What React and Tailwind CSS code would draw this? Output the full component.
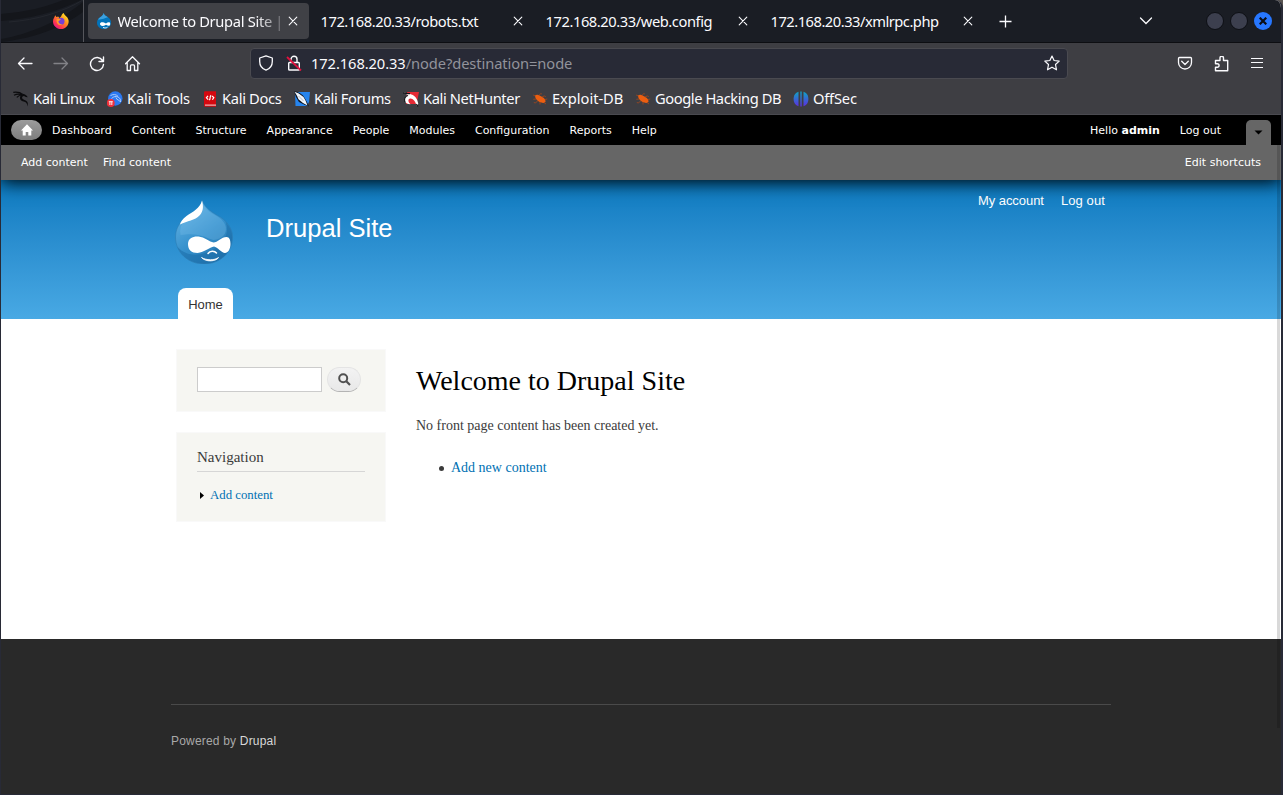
import React from "react";

const TABS = [
  { title: "172.168.20.33/robots.txt", tracking: "tracking-[-0.45px]" },
  { title: "172.168.20.33/web.config", tracking: "tracking-[-0.43px]" },
  { title: "172.168.20.33/xmlrpc.php", tracking: "tracking-[-0.49px]" },
];

const ADMIN_LINKS = [
  "Dashboard",
  "Content",
  "Structure",
  "Appearance",
  "People",
  "Modules",
  "Configuration",
  "Reports",
  "Help",
];

function DrupalLogo({ className }) {
  return (
    <svg className={className} viewBox="0 0 57 64">
      <defs>
        <linearGradient id="drop" x1="0.2" y1="0.1" x2="0.8" y2="1">
          <stop offset="0" stopColor="#5fb0e2" />
          <stop offset="0.5" stopColor="#3590cc" />
          <stop offset="1" stopColor="#2474ad" />
        </linearGradient>
      </defs>
      <path
        d="M26.700 0C28 6 34 11 42 15.500C51 20 57 28 57 37C57 53 44 64 28.500 64C13 64 0 53 0 37C0 27 6 20 13 15.500C21 11 26 8 26.700 0Z"
        fill="url(#drop)"
        stroke="#2a78ae"
        strokeWidth="0.500"
      />
      <path
        d="M50 22C55 27 56.500 32 56.500 37C56.500 53 44 63.500 28.500 63.500C16 63.500 6 57 2 47C12 58 28 56 40 48C50 41 54 32 50 22Z"
        fill="#1769a5"
        opacity="0.5"
      />
      <path
        d="M27.500 4C30 10 36 13 41 16C48 20 52 26 50 32C49 37 42 40 38 40C30 38 24 32 5 35C4 30 5 26 8 22C16 20 26 18 27.500 4Z"
        fill="#7fc0ea"
        opacity="0.3"
      />
      <path
        d="M26.500 .5C24 9 18 11 11 16C7 19 5 22 4.500 24.500C12 20.500 19 21 24.500 15C28 11 28 6 26.500 .5Z"
        fill="#fff"
      />
      <path
        d="M12.500 44C12.500 38 18 36 23 36.500C29 37 34 42 38 42.500C42 42.500 46 37 51 37C54 37 55 40 55 44C55 49 52.500 53 49.500 53C46 53 42 47 38.500 46.500C34 47 29 52.500 22 53C16 53 12.500 50 12.500 44Z"
        fill="#fff"
      />
      <path d="M32.500 53.500C34.500 50.500 39 50.500 41 53" fill="none" stroke="#fff" strokeWidth="1.500" strokeLinecap="round" />
      <path d="M26 57.500C31 60.500 39 60.500 43 57.500C41 61.500 30 62.500 26 57.500Z" fill="#fff" stroke="#fff" strokeWidth="0.800" />
    </svg>
  );
}

function DropFavicon() {
  return (
    <svg className="h-4 w-4 shrink-0" viewBox="0 0 16 16">
      <path d="M7.500 0C8 2 10 3 12 4.300C14 5.700 15 7.500 15 9.500C15 13.500 12 16 8 16C4 16 1 13.500 1 9.500C1 7 2.500 5.300 4.500 4C6.500 2.800 7.300 2 7.500 0Z" fill="#0273ba" />
      <path d="M7.500 0C8 2 10 3 12 4.300C10 5 4 7 2 6.500C4 3.500 7 3.500 7.500 0Z" fill="#3ba0de" />
      <path d="M4 10.800C4 9 7 8.500 10 10.600C12 8.800 14.200 9 14.200 10.800C14.200 13.300 12.500 13.400 10 11.700C7 13.700 4 13.200 4 10.800Z" fill="#fff" />
      <path d="M7 14.400C8.500 15.200 10.500 15 11.500 14.200" fill="none" stroke="#fff" strokeWidth="0.900" />
    </svg>
  );
}

function FirefoxIcon() {
  return (
    <svg className="h-4 w-4" viewBox="0 0 16 16">
      <defs>
        <linearGradient id="fox" x1="0.85" y1="0.1" x2="0.15" y2="0.95">
          <stop offset="0" stopColor="#ffe226" />
          <stop offset="0.4" stopColor="#ff8a1f" />
          <stop offset="0.75" stopColor="#ff3750" />
          <stop offset="1" stopColor="#e0128f" />
        </linearGradient>
      </defs>
      <path d="M1.200 4.500L2.300 2.200L3.400 3.900L5.200 3.500L6.500 5L8.200 3.300C8.500 1.800 9.500 .6 10.800 0C10.900 2.200 14.600 3.200 15.500 7C16.400 11.500 12.800 16 8 16C3.600 16 0 12.500 0 8.400C0 6.800.4 5.500 1.200 4.500Z" fill="url(#fox)" />
      <circle cx="8" cy="8.200" r="3.500" fill="#7540d8" />
      <path d="M3.600 6.300C5 5.300 7 5.500 8.200 6.600C7 6.900 6.600 7.700 5.400 8.200C5.300 10 7 11.400 9.300 11C7 13.500 3 11.500 3.600 6.300Z" fill="#ff9a2a" />
    </svg>
  );
}

function CloseIcon({ className }) {
  return (
    <svg className={className} viewBox="0 0 10 10" fill="none" stroke="#fbfbfe" strokeWidth="1.100" strokeLinecap="round">
      <path d="M1.200 1.200L8.800 8.800M8.800 1.200L1.200 8.800" />
    </svg>
  );
}

function KaliLinuxIcon() {
  return (
    <svg className="h-4 w-4" viewBox="0 0 16 16">
      <path d="M.3 1.300C4 .9 7.500 1.400 9.600 3.400M1 4.300C4 2.800 7 2.900 9.500 4.200M3.800 6.300C5 4.800 7.500 4 9.800 4" fill="none" stroke="#0b0b0d" strokeWidth="1.200" />
      <path d="M9.200 2.800C11.500 3 13.500 4.200 14.800 6.300L12.800 6L11 5C9.500 5 8.800 6 9.200 7.300C9.800 9.200 13 8.600 14.400 11C15 12.200 15 14 14.600 15.400C14.300 12.700 13 11 10.600 10.600C8 10.200 6.800 8.600 7 6.600C7.100 5 8 4 9.500 3.800Z" fill="#0b0b0d" />
    </svg>
  );
}

function KaliToolsIcon() {
  return (
    <svg className="h-4 w-4" viewBox="0 0 16 16">
      <circle cx="8.300" cy="7.500" r="7.200" fill="#2b78f0" />
      <path d="M3.500 4.500C6.500 3 9 3.300 11 5.300M4.500 7.500C7 5.300 9 5 11 6C13.300 7 13.800 9 13.500 11C12.500 8.500 9.500 9.500 9 6.500" fill="none" stroke="#b9d3fb" strokeWidth="0.900" />
      <circle cx="3.800" cy="12" r="3.900" fill="#f0303a" />
      <path d="M1.800 10.700H5.800M2.900 10.700V14M4.800 10.700V14" fill="none" stroke="#fff" strokeWidth="0.900" />
    </svg>
  );
}

function KaliDocsIcon() {
  return (
    <svg className="h-4 w-4" viewBox="0 0 16 16">
      <path d="M2 1.500Q2 .3 3.300.3H14V15.700H3.300Q2 15.700 2 14.400Z" fill="#d5080f" />
      <path d="M3 13.600H14V14.600H3Z" fill="#f4dcdc" />
      <path d="M6 4.800L4.400 6.800L6.200 8.600M7 9C9.300 8.300 7 5.200 9.200 4.400M10 5L11.800 6.600L10.400 8.800" fill="none" stroke="#fff" strokeWidth="1.200" />
    </svg>
  );
}

function KaliForumsIcon() {
  return (
    <svg className="h-4 w-4" viewBox="0 0 16 16">
      <path d="M1 1H16L15 11L13 15H1.500Z" fill="#2584ee" />
      <path d="M0 .3C4 .6 8 3 10 6C12 9 13.500 12 15 15.500L10.500 13.800L5 11L2 6Z" fill="#10151f" />
      <path d="M.5 .8L4.800 2.500L9.500 6L11.500 9.500L13.500 14.500L9 12L4.500 8.300L3 4.800Z" fill="#eef4fb" />
      <path d="M4.500 5L9.500 10" stroke="#9aa4b3" strokeWidth="0.700" />
    </svg>
  );
}

function KaliNetHunterIcon() {
  return (
    <svg className="h-4 w-4" viewBox="0 0 16 16">
      <path d="M4 1H16L13.500 13H3Z" fill="#e52a35" />
      <path d="M0 1.500C3 2 5 2.300 7 3C11 3.800 14.500 7 15.300 13L13.500 14.500C12.500 10.500 10 7.300 7.300 7.500C4.800 7.800 4.800 11 7.500 13.200C4 13.500 1 10.500 1.600 7.500C2 5.500 3.500 4.500 5.500 4.200Z" fill="#fff" />
      <path d="M0 1.800C3 2.800 5 2.600 7 2.600M5 4.500C2 5.500 1 8 2 11M13.300 13L15 15.500" fill="none" stroke="#141418" strokeWidth="1.100" />
    </svg>
  );
}

function BugIcon() {
  return (
    <svg className="h-4 w-4" viewBox="0 0 16 16">
      <path d="M3 4.500C4.500 3.300 6.500 3.700 8.500 5C11 6.200 13.300 7.600 13.600 10.300C13.300 12 11 12.300 9.300 11.500C6.500 10.700 3.200 8.500 3 4.500Z" fill="#ec5e10" />
      <path d="M4 8L1.300 8.300M5.500 10L3.500 12L1.800 11.500M8 11L8 13.500M7 4.500L8.700 2.500L9.800 3M10 6L12.500 4.800L13.700 6M13 8.500L15.300 8M12 11.500L14 13M3.300 5L1.200 4" fill="none" stroke="#a8481a" strokeWidth="0.800" />
    </svg>
  );
}

function OffSecIcon() {
  return (
    <svg className="h-4 w-4" viewBox="0 0 16 16">
      <defs>
        <linearGradient id="offsec" x1="0" y1="0" x2="0" y2="1">
          <stop offset="0" stopColor="#10a3c4" />
          <stop offset="1" stopColor="#5b2fe0" />
        </linearGradient>
      </defs>
      <path d="M5.500 .8V15.200C2.500 14.600.6 11.500.6 8C.6 4.500 2.500 1.600 5.500 .8Z" fill="url(#offsec)" />
      <path d="M10.500 .8V15.200C13.500 14.600 15.400 11.500 15.400 8C15.400 4.500 13.500 1.600 10.500 .8Z" fill="url(#offsec)" />
      <path d="M7.300.5H8.700V15.500H7.300Z" fill="url(#offsec)" />
    </svg>
  );
}

const BOOKMARKS = [
  { label: "Kali Linux", icon: KaliLinuxIcon, size: "w-[94px] tracking-[-0.45px]" },
  { label: "Kali Tools", icon: KaliToolsIcon, size: "w-[95px] tracking-[-0.15px]" },
  { label: "Kali Docs", icon: KaliDocsIcon, size: "w-[92px] tracking-[-0.33px]" },
  { label: "Kali Forums", icon: KaliForumsIcon, size: "w-[109px] tracking-[-0.4px]" },
  { label: "Kali NetHunter", icon: KaliNetHunterIcon, size: "w-[129px] tracking-[-0.38px]" },
  { label: "Exploit-DB", icon: BugIcon, size: "w-[103px] tracking-[-0.05px]" },
  { label: "Google Hacking DB", icon: BugIcon, size: "w-[158px] tracking-[-0.43px]" },
  { label: "OffSec", icon: OffSecIcon, size: "w-[80px] tracking-[-0.2px]" },
];

function TabStrip() {
  return (
    <div className="flex h-[43px] shrink-0 border-b border-[#0d0e12] bg-[#1a1d24]">
      <div className="relative flex w-[83px] items-center border-r border-[#55565c] pl-[52px]">
        <svg className="absolute top-0 left-0 h-[42px] w-[82px]" viewBox="0 0 82 42" fill="none">
          <path d="M0 39C30 34 60 20 82 2V12C60 28 35 38 0 42Z" fill="#14161b" />
          <path d="M0 14C24 12 46 7 62 0H80C56 12 28 19 0 21Z" fill="#14161b" />
          <path d="M8 22C36 20 62 12 82 0" stroke="#24272e" />
        </svg>
        <div className="relative">
          <FirefoxIcon />
        </div>
      </div>
      <div className="mt-[3px] ml-1 flex h-9 w-[221px] items-center rounded bg-[#404146] pl-2">
        <DropFavicon />
        <span className="ml-[5.500px] w-[170.500px] overflow-hidden whitespace-nowrap tracking-[-0.32px] [mask-image:linear-gradient(to_right,#000_138px,transparent_172px)]">
          Welcome to Drupal Site | D
        </span>
        <CloseIcon className="h-[10px] w-[10px] shrink-0" />
      </div>
      {TABS.map(({ title, tracking }) => (
        <div key={title} className="flex h-[42px] w-[225px] items-center pl-[11.500px]">
          <span className={`w-[192.500px] whitespace-nowrap ${tracking}`}>{title}</span>
          <CloseIcon className="h-[10px] w-[10px]" />
        </div>
      ))}
      <svg className="mt-[14px] ml-[14px] h-4 w-4" viewBox="0 0 16 16" stroke="#fbfbfe" strokeWidth="1.300">
        <path d="M7.500 1.500V13.500M1.500 7.500H13.500" />
      </svg>
      <svg className="mt-[13px] ml-[124px] h-4 w-4" viewBox="0 0 16 16" fill="none" stroke="#fbfbfe" strokeWidth="1.300" strokeLinecap="round">
        <path d="M2.500 5L8 10.500L13.500 5" />
      </svg>
      <div className="mt-3 ml-[52px] flex gap-[6px]">
        <span className="h-[18px] w-[18px] rounded-full border border-[#0d0f14] bg-[#3c3f4e]" />
        <span className="h-[18px] w-[18px] rounded-full border border-[#0d0f14] bg-[#3c3f4e]" />
        <span className="flex h-[18px] w-[18px] items-center justify-center rounded-full bg-[#2777ff]">
          <svg className="h-2 w-2" viewBox="0 0 8 8" stroke="#0b0d14" strokeWidth="2.200">
            <path d="M.7.7L7.300 7.300M7.300.7L.7 7.300" />
          </svg>
        </span>
      </div>
    </div>
  );
}

function NavToolbar() {
  return (
    <div className="flex h-[41px] items-center bg-[#3e3e43] pl-4">
      <svg className="h-4 w-4" viewBox="0 0 16 16" fill="none" stroke="#fbfbfe" strokeWidth="1.300" strokeLinecap="round" strokeLinejoin="round">
        <path d="M15 7.500H1.500M7 2L1.500 7.500L7 13" />
      </svg>
      <svg className="ml-5 h-4 w-4" viewBox="0 0 16 16" fill="none" stroke="#828287" strokeWidth="1.300" strokeLinecap="round" strokeLinejoin="round">
        <path d="M1 7.500H14.500M9 2L14.500 7.500L9 13" />
      </svg>
      <svg className="ml-5 h-4 w-4" viewBox="0 0 16 16" fill="none" stroke="#fbfbfe" strokeWidth="1.400" strokeLinecap="round" strokeLinejoin="round">
        <path d="M13.500 4.500A6.500 6.500 0 1 0 14.500 8.500M14.500 1V5.500H10" />
      </svg>
      <svg className="ml-5 h-4 w-4" viewBox="0 0 16 16" fill="none" stroke="#fbfbfe" strokeWidth="1.300" strokeLinecap="round" strokeLinejoin="round">
        <path d="M.5 7.700L7.500.7L14.500 7.700M2.200 6.300V14.500H5.500V10Q5.500 8.800 6.500 8.800H8.500Q9.500 8.800 9.500 10V14.500H12.800V6.300" />
      </svg>
      <div className="ml-[109px] flex h-[31px] w-[818px] items-center rounded border border-[#4a4a50] bg-[#282a36] pb-px pl-[7px]">
        <svg className="h-4 w-4" viewBox="0 0 16 16" fill="none" stroke="#fbfbfe" strokeWidth="1.300" strokeLinejoin="round">
          <path d="M8 .8L14.300 3V6.500C14.300 10.500 11.800 13.800 8 15.200C4.200 13.800 1.700 10.500 1.700 6.500V3Z" />
        </svg>
        <svg className="ml-3 h-4 w-4" viewBox="0 0 16 16" fill="none" stroke="#fbfbfe" strokeWidth="1.400">
          <path d="M5 7V4.300A3 3 0 0 1 11 4.300V7M3.500 7.500H12.500Q13.300 7.500 13.300 8.300V14.200Q13.300 15 12.500 15H3.500Q2.700 15 2.700 14.200V8.300Q2.700 7.500 3.500 7.500Z" />
          <path d="M1 2L15 15.500" stroke="#e0123f" strokeWidth="1.800" />
        </svg>
        <span className="ml-[9px] w-[733px] whitespace-nowrap tracking-[-0.09px] text-[#fbfbfe]">
          172.168.20.33<span className="text-[#92939b]">/node?destination=node</span>
        </span>
        <svg className="h-4 w-4 shrink-0" viewBox="0 0 16 16" fill="none" stroke="#fbfbfe" strokeWidth="1.200" strokeLinejoin="round">
          <path d="M8 1L10.100 5.500L15.200 6.100L11.500 9.500L12.500 14.800L8 12.200L3.500 14.800L4.500 9.500L.8 6.100L5.900 5.500Z" />
        </svg>
      </div>
      <svg className="ml-[109px] h-4 w-4" viewBox="0 0 16 16" fill="none" stroke="#fbfbfe" strokeWidth="1.300" strokeLinecap="round" strokeLinejoin="round">
        <path d="M2.500 1.500H13.500Q14.500 1.500 14.500 2.500V6.500A6.500 6.500 0 0 1 1.500 6.500V2.500Q1.500 1.500 2.500 1.500ZM4.700 5.300L8 8.500L11.300 5.300" />
      </svg>
      <svg className="ml-5 h-4 w-4" viewBox="0 0 16 16" fill="none" stroke="#fbfbfe" strokeWidth="1.400" strokeLinejoin="round">
        <path d="M2.500 14.800V11.300H4.300A1.600 1.600 0 0 0 4.300 7.700H2.500V4.500H7V2A1.600 1.600 0 0 1 10.500 2V4.500H14.700V14.800Z" />
      </svg>
      <svg className="ml-5 h-4 w-4" viewBox="0 0 16 16" fill="none" stroke="#fbfbfe" strokeWidth="1.200">
        <path d="M2 2.500H14M2 6.500H14M2 11.500H14" />
      </svg>
    </div>
  );
}

function BookmarksBar() {
  return (
    <div className="flex h-[31px] items-center border-b border-[#4a4a50] bg-[#3e3e43] pb-px pl-3">
      {BOOKMARKS.map(({ label, icon: Icon, size }) => (
        <div key={label} className={`flex shrink-0 items-center gap-1 ${size}`}>
          <Icon />
          <span className="pb-0.5 whitespace-nowrap">{label}</span>
        </div>
      ))}
    </div>
  );
}

function AdminToolbar() {
  return (
    <div className="relative z-10 font-['DejaVu_Sans',sans-serif] text-[11px] text-white shadow-[0_2px_17px_#000]">
      <div className="flex h-[30px] items-center bg-black pl-[10px]">
        <span className="flex h-5 w-[31px] items-center justify-center rounded-full bg-linear-to-b from-[#9c9c9c] to-[#7d7d7d]">
          <svg className="h-[12px] w-[12px]" viewBox="0 0 12 12" fill="#fff">
            <path d="M6 .3L12 6.500H10.300V11.500H7.300V8H4.700V11.500H1.700V6.500H0Z" />
          </svg>
        </span>
        <nav className="ml-[10px] flex gap-5 pt-0.5">
          {ADMIN_LINKS.map((link) => (
            <a key={link}>{link}</a>
          ))}
        </nav>
        <div className="ml-auto flex gap-5 pt-0.5">
          <span>
            Hello <strong>admin</strong>
          </span>
          <a>Log out</a>
        </div>
        <span className="mr-[10px] ml-[25px] flex h-[25px] w-[25px] items-center justify-center self-end rounded-t-[5px] bg-[#666]">
          <svg className="h-[5px] w-[9px]" viewBox="0 0 9 5">
            <path d="M.5.500H8.500L4.500 4.500Z" fill="#000" />
          </svg>
        </span>
      </div>
      <div className="flex h-[35px] items-center bg-[#666] pt-0.5 pr-5 pl-5">
        <a>Add content</a>
        <a className="ml-[15px]">Find content</a>
        <a className="ml-auto">Edit shortcuts</a>
      </div>
    </div>
  );
}

function SiteHeader() {
  return (
    <header className="flex h-[139px] flex-col justify-between bg-linear-to-b from-[#0779bf] to-[#48a9e4] font-['Liberation_Sans',sans-serif] text-white">
      <div className="flex pl-[174px]">
        <DrupalLogo className="mt-5 h-16 w-[58px]" />
        <h1 className="mt-[33px] ml-[33px] text-[25.600px] leading-[30px]">Drupal Site</h1>
        <nav className="mt-[13px] mr-44 ml-auto flex gap-[17px] text-[13px] leading-4">
          <a className="tracking-[-0.05px]">My account</a>
          <a className="tracking-[0.1px]">Log out</a>
        </nav>
      </div>
      <a className="ml-[177px] h-[31px] w-[55px] rounded-t-lg bg-white text-center text-[13px] leading-[33px] text-[#333]">
        Home
      </a>
    </header>
  );
}

function Sidebar() {
  return (
    <aside className="w-[210px] shrink-0">
      <div className="flex h-[63px] border border-[#f9f9f9] bg-[#f6f6f2] pt-[17px] pl-5">
        <span className="h-[25px] w-[125px] border border-[#ccc] bg-white" />
        <button className="ml-[5px] flex h-[25px] w-[34px] items-center justify-center rounded-full border border-[#e4e4e4] border-b-[#b4b4b4] bg-linear-to-b from-[#f3f3f3] to-[#e8e8e8]">
          <svg className="h-[13px] w-[13px]" viewBox="0 0 13 13" fill="none" stroke="#505050">
            <circle cx="5.200" cy="5.200" r="4" strokeWidth="2" />
            <path d="M8.300 8.300L12 12" strokeWidth="2.200" />
          </svg>
        </button>
      </div>
      <div className="mt-5 h-[90px] border border-[#f9f9f9] bg-[#f6f6f2] px-5 pt-[15px]">
        <h2 className="h-6 border-b border-[#d6d6d6] text-[15px] leading-[19px]">Navigation</h2>
        <div className="mt-[15px] flex text-[12.800px] leading-[17px]">
          <svg className="mt-[5px] ml-[3px] h-[7px] w-[4px]" viewBox="0 0 4 7">
            <path d="M0 0L4 3.500L0 7Z" fill="#000" />
          </svg>
          <a className="ml-[6px] text-[#0071b3]">Add content</a>
        </div>
      </div>
    </aside>
  );
}

function Content() {
  return (
    <main className="ml-[30px]">
      <h1 className="mt-[15px] text-[28px] leading-[34px] text-black">Welcome to Drupal Site</h1>
      <p className="mt-[19px] text-[14px] leading-[18px]">No front page content has been created yet.</p>
      <div className="mt-6 ml-[23px] flex items-center text-[14px] leading-[18px]">
        <span className="h-[5px] w-[5px] rounded-full bg-[#3b3b3b]" />
        <a className="ml-[7px] text-[#0071b3]">Add new content</a>
      </div>
    </main>
  );
}

export default function App() {
  return (
    <div className="w-[1283px] bg-[#5a5552]">
      <div className="relative flex h-[795px] flex-col overflow-hidden rounded-tr-lg border-r-2 border-l border-[#282a36] bg-white">
        <div className="relative z-20 flex flex-col font-['Noto_Sans',sans-serif] text-[14.700px] leading-5 text-[#fbfbfe]">
          <TabStrip />
          <NavToolbar />
          <BookmarksBar />
        </div>
        <AdminToolbar />
        <SiteHeader />
        <div className="flex h-80 pt-[30px] pl-[175px] font-['Liberation_Serif',serif] text-[#3b3b3b]">
          <Sidebar />
          <Content />
        </div>
        <footer className="h-[156px] border-b border-[#282a36] bg-[#292929] px-[170px] pt-[65px] font-['Liberation_Sans',sans-serif] text-[12px] tracking-[0.19px] text-[#a8a8a8]">
          <p className="border-t border-[#4a4a4a] pt-[27px] leading-[18px]">
            Powered by <a className="text-[#d8d8d8]">Drupal</a>
          </p>
        </footer>
        {/* overlay scrollbar */}
        <div className="absolute top-[145px] right-px z-20 h-[583px] w-[3px] bg-black/15" />
      </div>
    </div>
  );
}
